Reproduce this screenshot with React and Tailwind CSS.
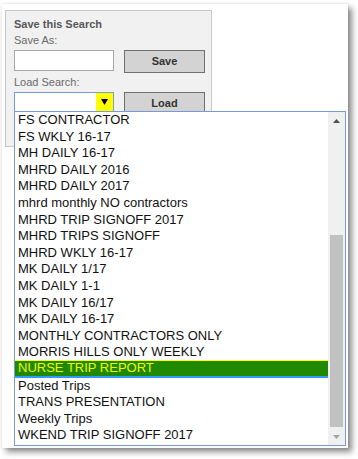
import React from 'react';

const searches = [
    'FS CONTRACTOR',
    'FS WKLY 16-17',
    'MH DAILY 16-17',
    'MHRD DAILY 2016',
    'MHRD DAILY 2017',
    'mhrd monthly NO contractors',
    'MHRD TRIP SIGNOFF 2017',
    'MHRD TRIPS SIGNOFF',
    'MHRD WKLY 16-17',
    'MK DAILY 1/17',
    'MK DAILY 1-1',
    'MK DAILY 16/17',
    'MK DAILY 16-17',
    'MONTHLY CONTRACTORS ONLY',
    'MORRIS HILLS ONLY WEEKLY',
    'NURSE TRIP REPORT',
    'Posted Trips',
    'TRANS PRESENTATION',
    'Weekly Trips',
    'WKEND TRIP SIGNOFF 2017'
];

const selected = 'NURSE TRIP REPORT';

const Arrow = ({ down, color }) => (
    <svg width="7" height="4" viewBox="0 0 7 4">
        <polygon points={down ? '0,0 7,0 3.5,4' : '0,4 7,4 3.5,0'} fill={color} />
    </svg>
);

const App = () => {
    return (
        <div className="w-[358px] h-[459px] bg-white pl-[2px] pt-[4px] font-['Liberation_Sans',Arial,sans-serif]">
            <div className="relative w-[346px] h-[444px] bg-white pl-[3px] pt-[6px] shadow-[0_0_3px_rgba(0,0,0,0.12),4px_4px_6px_rgba(0,0,0,0.45)]">
                {/* save / load panel */}
                <div className="w-[207px] h-[137px] border border-[#c8c8c8] bg-[#f1f1f1] pl-[8px] pt-[7px]">
                    <div className="text-[11px] leading-[13px] font-bold text-[#585858]">Save this Search</div>
                    <div className="mt-[3px] text-[11px] leading-[13px] text-[#6a6a6a]">Save As:</div>
                    <div className="mt-[3px] flex items-start gap-[10px]">
                        <input
                            type="text"
                            className="w-[100px] h-[21px] border border-[#a9a9a9] bg-white outline-none"
                        />
                        <button className="w-[81px] h-[23px] border border-[#707070] bg-[#d3d3d3] text-[11px] font-bold text-[#333]">
                            Save
                        </button>
                    </div>
                    <div className="mt-[3px] text-[11px] leading-[13px] text-[#6a6a6a]">Load Search:</div>
                    <div className="mt-[3px] flex items-start gap-[10px]">
                        <div className="w-[100px] h-[20px] border border-[#7a9bd1] bg-white flex justify-end">
                            <div className="w-[17px] h-full bg-[#ffff00] flex items-center justify-center">
                                <svg width="7" height="6" viewBox="0 0 7 6">
                                    <polygon points="0,0 7,0 3.5,6" fill="#000" />
                                </svg>
                            </div>
                        </div>
                        <button className="w-[81px] h-[23px] border border-[#707070] bg-[#d3d3d3] text-[11px] font-bold text-[#333]">
                            Load
                        </button>
                    </div>
                </div>

                {/* open dropdown list */}
                <div className="absolute left-[12px] top-[107px] w-[332px] h-[335px] border border-[#7a9bd1] bg-white flex">
                    <div className="flex-1 flex flex-col">
                        {searches.map((name) => (
                            <div
                                key={name}
                                className={
                                    name === selected
                                        ? 'h-[16.6px] leading-[14.6px] pl-[3px] text-[13px] whitespace-nowrap bg-[#1f8a00] text-[#f4f400] border-b-2 border-[#3399ff] shadow-[0_-1px_0_#ffff00]'
                                        : 'h-[16.6px] leading-[16.6px] pl-[3px] text-[13px] whitespace-nowrap text-[#111]'
                                }
                            >
                                {name}
                            </div>
                        ))}
                    </div>
                    <div className="w-[17px] h-full bg-[#f0f0f0] flex flex-col">
                        <div className="h-[17px] flex items-center justify-center">
                            <Arrow color="#505050" />
                        </div>
                        <div className="flex-1">
                            <div className="mt-[106px] mx-[2px] h-[192px] bg-[#c1c1c1]" />
                        </div>
                        <div className="h-[17px] flex items-center justify-center">
                            <Arrow down color="#a3a3a3" />
                        </div>
                    </div>
                </div>
            </div>
        </div>
    );
};

export default App;
